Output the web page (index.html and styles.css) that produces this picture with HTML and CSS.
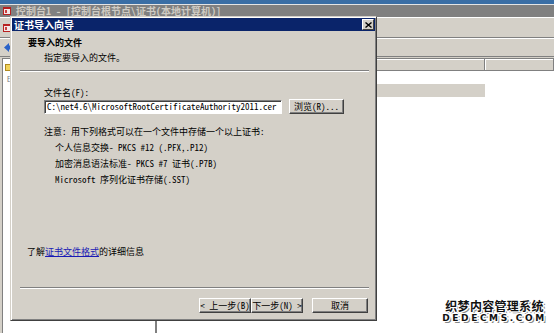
FILE: index.html
```html
<!DOCTYPE html>
<html lang="zh-CN">
<head>
<meta charset="utf-8">
<title>证书导入向导</title>
<link rel="stylesheet" href="styles.css">
</head>
<body>
<div class="screen">
  <div class="topstrip"></div>
  <div class="wintitle">
    <svg class="mmc-icon" width="8" height="8" viewBox="0 0 8 8"><rect x="0" y="0" width="8" height="8" fill="#b82020"/><rect x="1" y="2" width="6" height="5" fill="#f4e8e8"/><rect x="2" y="3" width="2" height="3" fill="#c84040"/></svg>
    <span>控制台1 - [控制台根节点\证书(本地计算机)]</span>
  </div>
  <div class="menubar">
    <svg class="mmc-icon" width="8" height="8" viewBox="0 0 8 8"><rect x="0" y="0" width="8" height="8" fill="#b82020"/><rect x="1" y="2" width="6" height="5" fill="#f4e8e8"/><rect x="2" y="3" width="2" height="3" fill="#c84040"/></svg>
  </div>
  <div class="toolbar">
    <svg width="7" height="9" viewBox="0 0 7 9"><path d="M0 4.5 L5 0 L5 2.5 L7 2.5 L7 6.5 L5 6.5 L5 9 Z" fill="#2a62c8"/></svg>
  </div>
  <div class="main">
    <div class="tree">
      <div class="tree-item"><span class="folder"></span></div>
      <div class="tree-item sub">E</div>
    </div>
    <div class="list">
      <div class="list-header">
        <div class="hcell hcell-main"></div>
        <div class="hcell hcell-rest"></div>
      </div>
      <div class="list-row"></div>
      <div class="list-row selected"></div>
    </div>
  </div>
</div>

<div class="dialog">
  <div class="dlg-title">
    <span>证书导入向导</span>
    <span class="close-btn"><svg width="7" height="6" viewBox="0 0 7 6"><path d="M0.5 0.5 L6.5 5.5 M6.5 0.5 L0.5 5.5" stroke="#000" stroke-width="1.4"/></svg></span>
  </div>
  <div class="dlg-header">
    <div class="hdr-title">要导入的文件</div>
    <div class="hdr-sub">指定要导入的文件。</div>
  </div>
  <div class="separator"></div>
  <div class="dlg-body">
    <div class="file-label">文件名(F):</div>
    <div class="file-row">
      <div class="text-input">C:\net4.6\MicrosoftRootCertificateAuthority2011.cer</div>
      <div class="btn browse">浏览(R)...</div>
    </div>
    <div class="notes">
      <div class="note">注意: 用下列格式可以在一个文件中存储一个以上证书:</div>
      <div class="note sub">个人信息交换- PKCS #12 (.PFX,.P12)</div>
      <div class="note sub">加密消息语法标准- PKCS #7 证书(.P7B)</div>
      <div class="note sub">Microsoft 序列化证书存储(.SST)</div>
    </div>
    <div class="more-info">了解<a class="link" href="#">证书文件格式</a>的详细信息</div>
  </div>
  <div class="separator"></div>
  <div class="dlg-footer">
    <div class="btn nav">&lt; 上一步(B)</div>
    <div class="btn nav">下一步(N) &gt;</div>
    <div class="btn cancel">取消</div>
  </div>
</div>

<div class="watermark">
  <div class="wm-cn">织梦内容管理系统</div>
  <div class="wm-en">DEDECMS.COM</div>
</div>
</body>
</html>
```

FILE: styles.css
```css
* {
  box-sizing: border-box;
  margin: 0;
  padding: 0;
}

html, body {
  width: 554px;
  height: 333px;
  overflow: hidden;
}

body {
  position: relative;
  background: #fff;
  color: #000;
  font-family: "Noto Sans Mono CJK SC", "Noto Sans CJK SC", sans-serif;
  font-size: 9px;
  line-height: 12px;
}

/* ---------- background console window ---------- */
.screen {
  display: flex;
  flex-direction: column;
  height: 333px;
  background: #d4d0c8;
}

.topstrip {
  height: 5px;
  background: #3a6ea5;
  border-bottom: 1px solid #e4e4e4;
}

.wintitle {
  height: 12px;
  background: #808080;
  color: #cfcbc3;
  display: flex;
  align-items: center;
  gap: 5px;
  padding-left: 3px;
  font-family: "Noto Sans Mono CJK SC", "Noto Sans CJK SC", sans-serif;
  font-weight: bold;
  font-size: 10px;
  white-space: nowrap;
}

.mmc-icon {
  flex: none;
  display: block;
}

.menubar {
  height: 21px;
  border-top: 1px solid #fff;
  border-bottom: 1px solid #808080;
  display: flex;
  align-items: center;
  padding-left: 3px;
}

.toolbar {
  height: 19px;
  border-top: 1px solid #fff;
  border-bottom: 1px solid #808080;
  display: flex;
  align-items: center;
  padding-left: 4px;
}

.main {
  flex: 1;
  min-height: 0;
  display: flex;
  padding: 1px 0 0 2px;
}

.tree {
  width: 154px;
  background: #fff;
  border: 1px solid #808080;
  border-bottom: none;
  padding: 2px 0 0 2px;
  white-space: nowrap;
  overflow: hidden;
}

.tree-item {
  display: flex;
  align-items: center;
  gap: 3px;
  height: 12px;
  font-size: 9px;
}

.tree-item.sub {
  padding-left: 2px;
  color: #777;
  font-size: 7px;
}

.folder {
  width: 8px;
  height: 7px;
  background: #f2d35a;
  border: 1px solid #b08a20;
  flex: none;
}

.list {
  flex: 1;
  background: #fff;
  border-top: 1px solid #808080;
  border-left: 1px solid #808080;
}

.list-header {
  display: flex;
  height: 12px;
  border-bottom: 1px solid #808080;
  background: #d4d0c8;
}

.hcell {
  height: 11px;
  border-right: 1px solid #808080;
  box-shadow: inset 1px 1px #fff;
}

.hcell-main {
  width: 328px;
}

.hcell-rest {
  flex: 1;
}

.list-row {
  height: 13px;
  width: 328px;
}

.list-row.selected {
  background: #d4d0c8;
}

/* ---------- wizard dialog ---------- */
.dialog {
  position: absolute;
  left: 10px;
  top: 16px;
  width: 367px;
  height: 305px;
  background: #d4d0c8;
  border: 1px solid;
  border-color: #d4d0c8 #404040 #404040 #d4d0c8;
  box-shadow: inset 1px 1px #fff, inset -1px -1px #808080;
  padding: 1px;
  display: flex;
  flex-direction: column;
}

.dlg-title {
  flex: none;
  height: 13px;
  background: #0a246a;
  color: #fff;
  font-family: "Noto Sans CJK SC", sans-serif;
  font-weight: bold;
  font-size: 10px;
  line-height: 13px;
  display: flex;
  align-items: center;
  justify-content: space-between;
  padding: 0 1px 0 2px;
}

.close-btn {
  width: 12px;
  height: 11px;
  background: #d4d0c8;
  border: 1px solid;
  border-color: #fff #404040 #404040 #fff;
  display: flex;
  align-items: center;
  justify-content: center;
}

.close-btn svg {
  display: block;
}

.dlg-header {
  flex: none;
  height: 39px;
  padding: 6px 0 0 16px;
}

.hdr-title {
  font-family: "Noto Sans CJK SC", sans-serif;
  font-weight: bold;
  height: 12px;
}

.hdr-sub {
  margin-top: 3px;
  padding-left: 16px;
  height: 12px;
}

.separator {
  flex: none;
  height: 2px;
  margin: 0 6px 0 8px;
  border-top: 1px solid #808080;
  border-bottom: 1px solid #fff;
}

.dlg-body {
  flex: 1;
  min-height: 0;
  display: flex;
  flex-direction: column;
  padding: 15px 0 29px 15px;
}

.file-label {
  margin-left: 17px;
  height: 12px;
}

.file-row {
  margin-left: 17px;
  display: flex;
  align-items: center;
  gap: 7px;
  height: 15px;
}

.text-input {
  width: 238px;
  height: 14px;
  background: #fff;
  border: 1px solid;
  border-color: #808080 #fff #fff #808080;
  box-shadow: inset 1px 1px #404040;
  padding-left: 2px;
  line-height: 12px;
  white-space: nowrap;
  overflow: hidden;
}

.btn {
  height: 15px;
  background: #d4d0c8;
  border: 1px solid;
  border-color: #fff #404040 #404040 #fff;
  box-shadow: inset -1px -1px #808080;
  display: flex;
  align-items: center;
  justify-content: center;
  white-space: nowrap;
  line-height: 12px;
}

.browse {
  width: 55px;
}

.notes {
  margin-left: 17px;
  margin-top: 12px;
  display: flex;
  flex-direction: column;
  gap: 4px;
}

.note {
  height: 12px;
  white-space: nowrap;
}

.note.sub {
  padding-left: 11px;
}

.more-info {
  margin-top: auto;
  height: 12px;
  white-space: nowrap;
}

.link {
  color: #1a1ab4;
  text-decoration: underline;
}

.dlg-footer {
  flex: none;
  height: 30px;
  display: flex;
  justify-content: flex-end;
  align-items: flex-start;
  padding: 9px 7px 0 0;
}

.nav {
  width: 52px;
}

.cancel {
  width: 56px;
  margin-left: 9px;
}

/* ---------- watermark ---------- */
.watermark {
  position: absolute;
  left: 445px;
  top: 299px;
  width: 99px;
  display: flex;
  flex-direction: column;
  align-items: center;
  font-family: "Noto Sans CJK SC", sans-serif;
  font-weight: bold;
  color: #111;
  text-shadow: 1px 0 #fff, -1px 0 #fff, 0 1px #fff, 0 -1px #fff,
    1px 1px #fff, -1px -1px #fff, 1px -1px #fff, -1px 1px #fff,
    2px 2px #888;
}

.wm-cn {
  font-size: 12px;
  line-height: 14px;
  letter-spacing: 0.3px;
  white-space: nowrap;
}

.wm-en {
  font-family: "DejaVu Sans", sans-serif;
  font-size: 9px;
  line-height: 10px;
  letter-spacing: 2.6px;
  white-space: nowrap;
}
```
